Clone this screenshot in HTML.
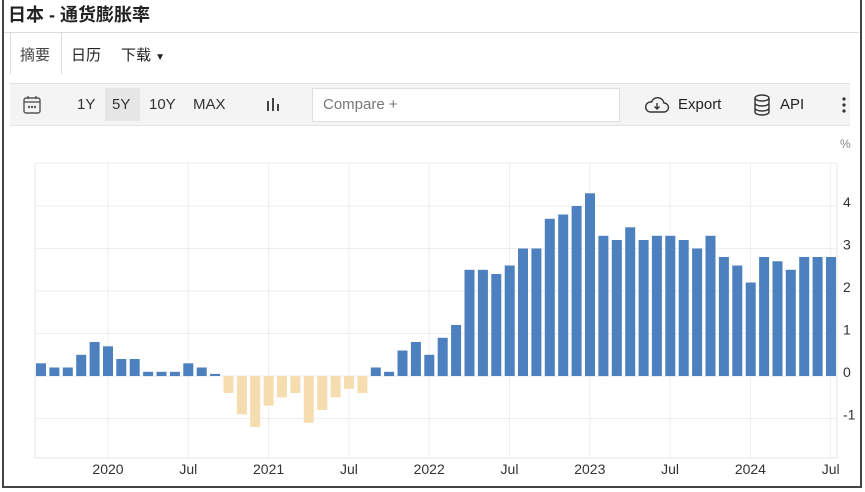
<!DOCTYPE html><html><head><meta charset="utf-8"><style>
body{margin:0;width:865px;height:492px;background:#fff;position:relative;overflow:hidden;font-family:"Liberation Sans","Noto Sans CJK SC",sans-serif}
.a{position:absolute}
</style></head><body>
<div class="a" style="left:2px;top:0;width:856px;height:486px;border:2px solid #444;border-top:none"></div>
<div class="a" style="left:8px;top:1px;font-size:18px;font-weight:bold;color:#222">日本 - 通货膨胀率</div>
<div class="a" style="left:4px;top:32px;width:855px;height:1px;background:#ddd"></div>
<div class="a" style="left:10px;top:33px;width:50px;height:41px;border-right:1px solid #ddd;border-left:1px solid #ddd;background:#fff"></div>
<div class="a" style="left:20px;top:44px;font-size:15px;color:#444">摘要</div>
<div class="a" style="left:71px;top:44px;font-size:15px;color:#222">日历</div>
<div class="a" style="left:121px;top:44px;font-size:15px;color:#222">下载 <span style="font-size:10px">▼</span></div>
<div class="a" style="left:10px;top:83px;width:840px;height:41px;background:#f4f4f4;border-top:1px solid #e4e4e4;border-bottom:1px solid #e4e4e4"></div>
<svg class="a" style="left:22px;top:95px" width="20" height="20" viewBox="0 0 20 20" fill="none" stroke="#555" stroke-width="1.4"><rect x="2" y="3" width="16" height="15" rx="2"/><line x1="2" y1="7" x2="18" y2="7"/><line x1="6" y1="1" x2="6" y2="4"/><line x1="14" y1="1" x2="14" y2="4"/><circle cx="7" cy="12" r=".5"/><circle cx="10" cy="12" r=".5"/><circle cx="13" cy="12" r=".5"/></svg>
<div class="a" style="left:105px;top:88px;width:35px;height:33px;background:#e6e6e6"></div>
<div class="a" style="left:77px;top:96px;font-size:15px;color:#333;word-spacing:0">1Y</div>
<div class="a" style="left:112px;top:96px;font-size:15px;color:#333">5Y</div>
<div class="a" style="left:149px;top:96px;font-size:15px;color:#333">10Y</div>
<div class="a" style="left:193px;top:96px;font-size:15px;color:#333">MAX</div>
<svg class="a" style="left:266px;top:97px" width="16" height="16"><rect x="1" y="4" width="2" height="10" fill="#444"/><rect x="6" y="1" width="2" height="13" fill="#444"/><rect x="11" y="7" width="2" height="7" fill="#444"/></svg>
<div class="a" style="left:312px;top:88px;width:306px;height:32px;background:#fff;border:1px solid #e0e0e0"></div>
<div class="a" style="left:323px;top:96px;font-size:15px;color:#777">Compare +</div>
<svg class="a" style="left:644px;top:95px" width="26" height="20" viewBox="0 0 26 20" fill="none" stroke="#333" stroke-width="1.4"><path d="M6 17h14a4.5 4.5 0 0 0 0-9 6.5 6.5 0 0 0-12.5-1A5 5 0 0 0 6 17z"/><path d="M13 8v6m-2.5-2.5L13 14l2.5-2.5"/></svg>
<div class="a" style="left:678px;top:96px;font-size:15px;color:#222">Export</div>
<svg class="a" style="left:753px;top:94px" width="18" height="22" viewBox="0 0 18 22" fill="none" stroke="#333" stroke-width="1.4"><ellipse cx="9" cy="4" rx="7" ry="3"/><path d="M2 4v14c0 1.7 3 3 7 3s7-1.3 7-3V4M2 9c0 1.7 3 3 7 3s7-1.3 7-3M2 14c0 1.7 3 3 7 3s7-1.3 7-3"/></svg>
<div class="a" style="left:780px;top:96px;font-size:15px;color:#222">API</div>
<svg class="a" style="left:841px;top:96px" width="6" height="18"><circle cx="3" cy="3" r="1.6" fill="#333"/><circle cx="3" cy="9" r="1.6" fill="#333"/><circle cx="3" cy="15" r="1.6" fill="#333"/></svg>
<svg class="a" style="left:0;top:0" width="865" height="492" id="c"></svg>
<script>
var s='',v=[0.3,0.2,0.2,0.5,0.8,0.7,0.4,0.4,0.1,0.1,0.1,0.3,0.2,0.05,-0.4,-0.9,-1.2,-0.7,-0.5,-0.4,-1.1,-0.8,-0.5,-0.3,-0.4,0.2,0.1,0.6,0.8,0.5,0.9,1.2,2.5,2.5,2.4,2.6,3.0,3.0,3.7,3.8,4.0,4.3,3.3,3.2,3.5,3.2,3.3,3.3,3.2,3.0,3.3,2.8,2.6,2.2,2.8,2.7,2.5,2.8,2.8,2.8];
var B=376,U=42.5;
[4,3,2,1,0,-1].forEach(function(k){var y=B-k*U;s+='<line x1="35" x2="837" y1="'+y+'" y2="'+y+'" stroke="#eee"/><text x="843" y="'+(y+1)+'" font-size="14" fill="#333" font-family="Liberation Sans">'+k+'</text>';});
s+='<line x1="35" x2="837" y1="163" y2="163" stroke="#eee"/>';
var L=['2020','Jul','2021','Jul','2022','Jul','2023','Jul','2024','Jul'];
for(var i=0;i<10;i++){var x=108+i*80.3;s+='<line x1="'+x+'" x2="'+x+'" y1="163" y2="458" stroke="#eee"/><text x="'+x+'" y="474" text-anchor="middle" font-size="14" fill="#333" font-family="Liberation Sans">'+L[i]+'</text>';}
s+='<line x1="35" x2="35" y1="163" y2="458" stroke="#e4e4e4"/><line x1="837" x2="837" y1="163" y2="458" stroke="#e4e4e4"/><line x1="35" x2="837" y1="458" y2="458" stroke="#e4e4e4"/>';
s+='<text x="840" y="148" font-size="12" fill="#888" font-family="Liberation Sans">%</text>';
v.forEach(function(d,i){var x=41+i*13.39-5,h=Math.abs(d)*U,y=d>=0?B-h:B;s+='<rect x="'+x.toFixed(1)+'" y="'+y.toFixed(1)+'" width="10" height="'+h.toFixed(1)+'" fill="'+(d>=0?'#4c80be':'#f5ddb0')+'"/>';});
document.getElementById('c').innerHTML=s;
</script>
</body></html>
